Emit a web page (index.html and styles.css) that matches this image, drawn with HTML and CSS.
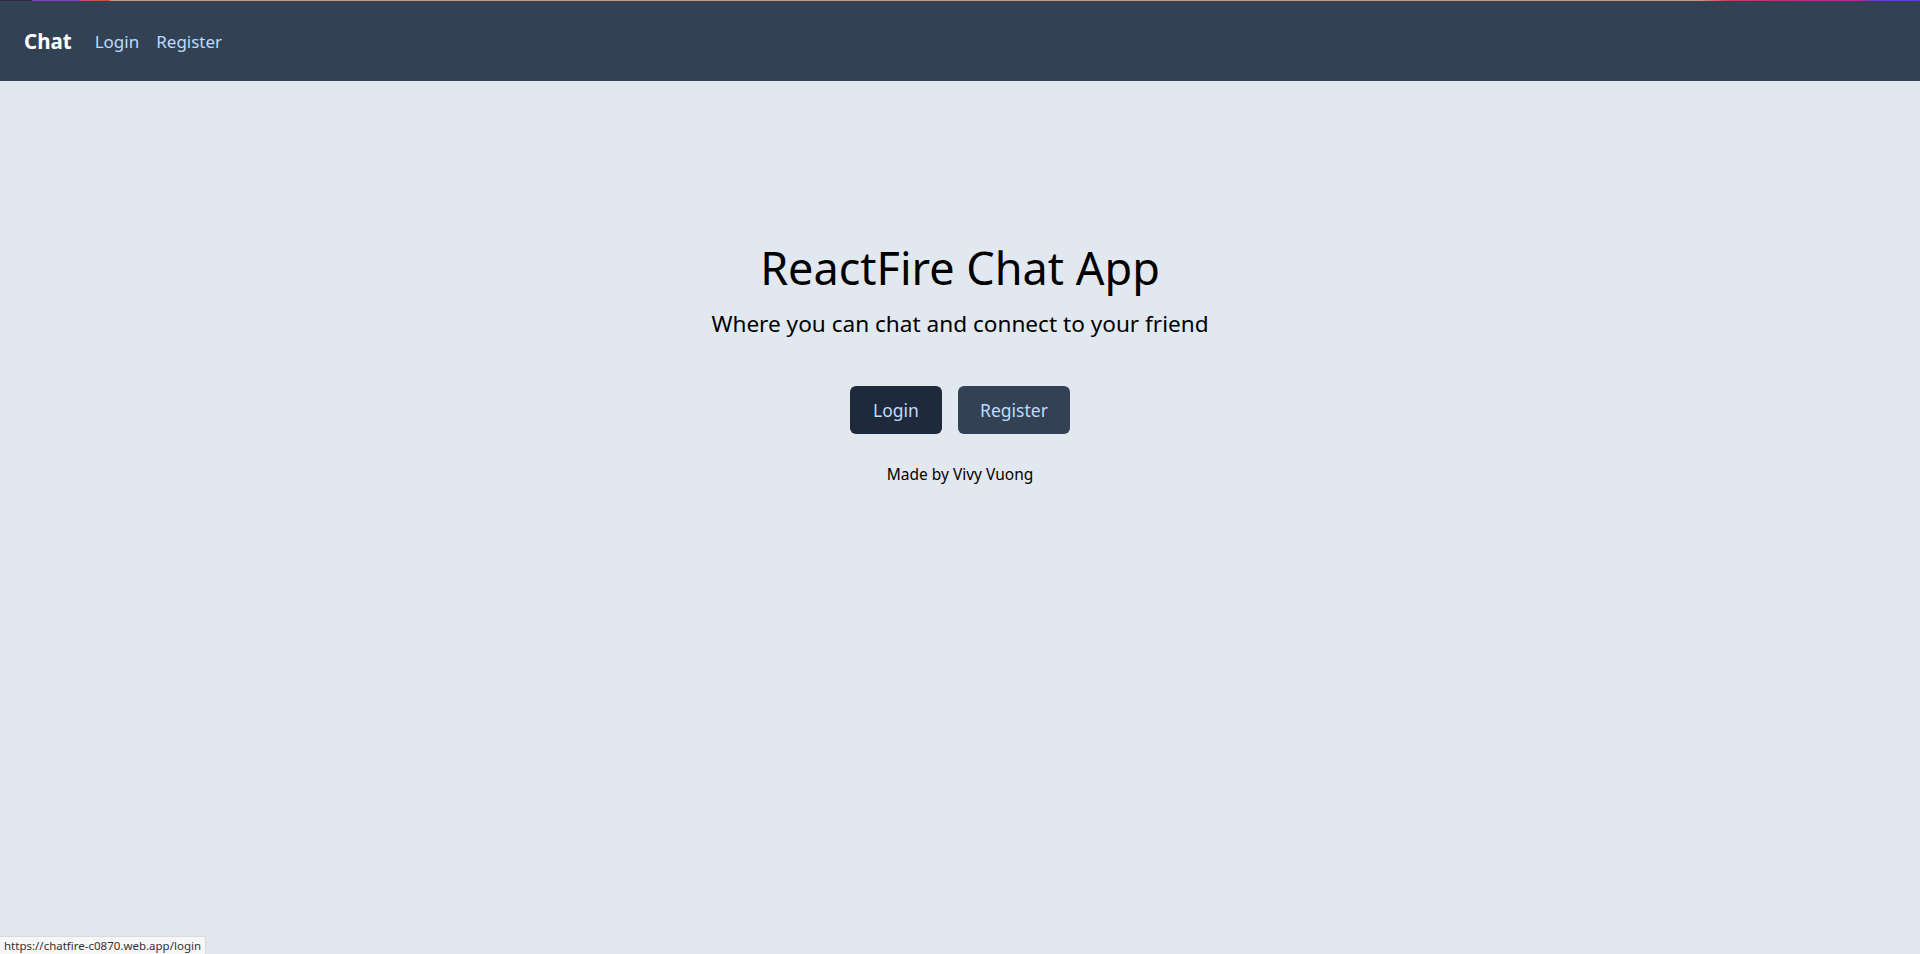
FILE: index.html
```html
<!DOCTYPE html>
<html lang="en">
<head>
<meta charset="utf-8">
<title>ReactFire Chat App</title>
<link rel="stylesheet" href="styles.css">
</head>
<body>
<div class="topline"></div>
<nav class="navbar">
  <a class="brand" href="#">Chat</a>
  <a class="navlink" href="#">Login</a>
  <a class="navlink" href="#">Register</a>
</nav>
<main class="hero">
  <div class="heading">
    <h1 class="title">ReactFire Chat App</h1>
    <p class="subtitle">Where you can chat and connect to your friend</p>
  </div>
  <div class="actions">
    <a class="btn btn-login" href="#">Login</a>
    <a class="btn btn-register" href="#">Register</a>
  </div>
  <p class="credit">Made by Vivy Vuong</p>
</main>
<div class="statusbar">https://chatfire-c0870.web.app/login</div>
</body>
</html>
```
FILE: styles.css
```css
html, body {
  margin: 0;
  padding: 0;
}
body {
  background: #e2e8f0;
  font-family: "Noto Sans", "Open Sans", sans-serif;
  color: #000;
  min-height: 954px;
}
a { text-decoration: none; }
.topline {
  height: 1px;
  background: linear-gradient(to right,
    #2e2a40 0, #2e2a40 32px,
    #8a3fc0 32px, #8a3fc0 80px,
    #c0507a 80px, #c0507a 90px,
    #c25a3c 90px, #c25a3c 110px,
    #c99580 110px, #c99580 1700px,
    #c0405a 1730px, #c0307a 1780px,
    #b02aa0 1860px, #6a40d0 1875px, #5a40d0 1920px);
}
.navbar {
  height: 80px;
  background: #334155;
  display: flex;
  align-items: center;
  padding: 0 24px;
  gap: 17px;
}
.brand {
  color: #fff;
  font-weight: 700;
  font-size: 20.5px;
  margin-right: 6px;
}
.navlink {
  color: #bfdbfe;
  font-size: 17px;
}
.hero {
  display: flex;
  flex-direction: column;
  align-items: center;
  padding-top: 160px;
}
.heading {
  text-align: center;
}
.title {
  margin: 0;
  font-size: 45px;
  font-weight: 400;
  line-height: 54px;
}
.subtitle {
  margin: 14px 0 0;
  font-size: 22.6px;
  line-height: 30px;
}
.actions {
  display: flex;
  gap: 16px;
  margin-top: 47px;
}
.btn {
  display: flex;
  align-items: center;
  justify-content: center;
  height: 48px;
  padding: 0 24px;
  border-radius: 6px;
  color: #bfdbfe;
  font-size: 17.5px;
}
.btn-login { background: #1e293b; width: 44px; }
.btn-register { background: #334155; width: 64px; }
.credit {
  margin: 28px 0 0;
  font-size: 15.5px;
  line-height: 24px;
}
.statusbar {
  position: fixed;
  left: 0;
  bottom: 0;
  height: 17px;
  line-height: 17px;
  padding: 0 4px;
  background: #f7f7f7;
  border-top: 1px solid #dcdcdc;
  border-right: 1px solid #dcdcdc;
  font-size: 11.5px;
  color: #333;
  font-family: "Noto Sans", sans-serif;
}
```
